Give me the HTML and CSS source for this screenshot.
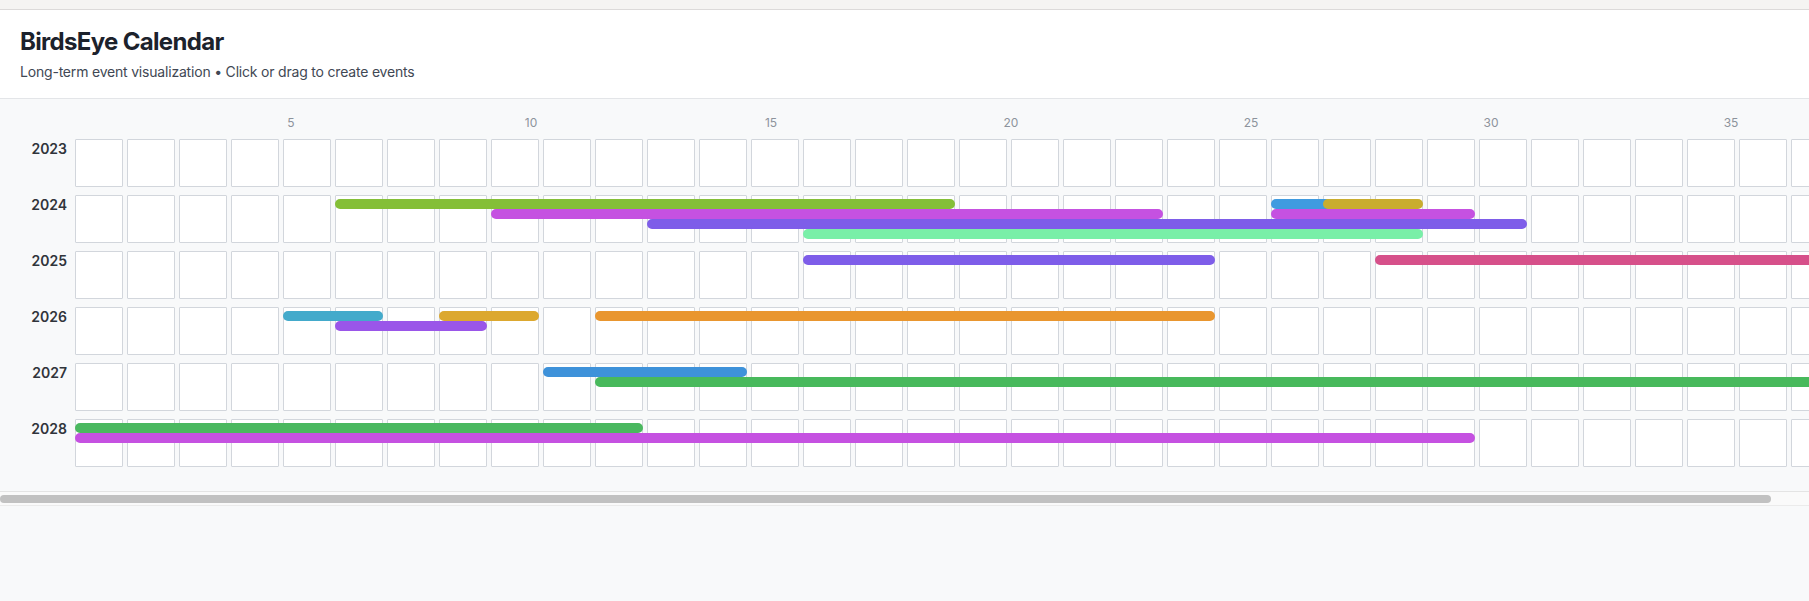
FILE: index.html
```html
<!DOCTYPE html>
<html lang="en">
<head>
<meta charset="utf-8">
<title>BirdsEye Calendar</title>
<link rel="stylesheet" href="styles.css">
</head>
<body>
<div class="topstrip"></div>
<header class="app-header">
  <h1 class="title">BirdsEye Calendar</h1>
  <p class="subtitle">Long-term event visualization • Click or drag to create events</p>
</header>
<main class="viewport">
  <div class="scroller">
    <div class="board">
      <div class="day-scale">
        <span></span><span></span><span></span><span></span><span>5</span>
        <span></span><span></span><span></span><span></span><span>10</span>
        <span></span><span></span><span></span><span></span><span>15</span>
        <span></span><span></span><span></span><span></span><span>20</span>
        <span></span><span></span><span></span><span></span><span>25</span>
        <span></span><span></span><span></span><span></span><span>30</span>
        <span></span><span></span><span></span><span></span><span>35</span>
      </div>

      <div class="year-row">
        <div class="year-label">2023</div>
        <div class="track">
          <i class="cell"></i><i class="cell"></i><i class="cell"></i><i class="cell"></i><i class="cell"></i><i class="cell"></i><i class="cell"></i><i class="cell"></i><i class="cell"></i><i class="cell"></i><i class="cell"></i><i class="cell"></i><i class="cell"></i><i class="cell"></i><i class="cell"></i><i class="cell"></i><i class="cell"></i><i class="cell"></i><i class="cell"></i><i class="cell"></i><i class="cell"></i><i class="cell"></i><i class="cell"></i><i class="cell"></i><i class="cell"></i><i class="cell"></i><i class="cell"></i><i class="cell"></i><i class="cell"></i><i class="cell"></i><i class="cell"></i><i class="cell"></i><i class="cell"></i><i class="cell"></i>
        </div>
      </div>

      <div class="year-row">
        <div class="year-label">2024</div>
        <div class="track">
          <i class="cell"></i><i class="cell"></i><i class="cell"></i><i class="cell"></i><i class="cell"></i><i class="cell"></i><i class="cell"></i><i class="cell"></i><i class="cell"></i><i class="cell"></i><i class="cell"></i><i class="cell"></i><i class="cell"></i><i class="cell"></i><i class="cell"></i><i class="cell"></i><i class="cell"></i><i class="cell"></i><i class="cell"></i><i class="cell"></i><i class="cell"></i><i class="cell"></i><i class="cell"></i><i class="cell"></i><i class="cell"></i><i class="cell"></i><i class="cell"></i><i class="cell"></i><i class="cell"></i><i class="cell"></i><i class="cell"></i><i class="cell"></i><i class="cell"></i><i class="cell"></i>
          <div class="event" style="--s:6;--e:17;--l:0;--c:#84bf37"></div>
          <div class="event" style="--s:9;--e:21;--l:1;--c:#c551e1"></div>
          <div class="event" style="--s:12;--e:28;--l:2;--c:#7e5de9"></div>
          <div class="event" style="--s:15;--e:26;--l:3;--c:#79efa8"></div>
          <div class="event" style="--s:24;--e:25;--l:0;--c:#3f9be0"></div>
          <div class="event" style="--s:25;--e:26;--l:0;--c:#c9ad2f"></div>
          <div class="event" style="--s:24;--e:27;--l:1;--c:#c551e1"></div>
        </div>
      </div>

      <div class="year-row">
        <div class="year-label">2025</div>
        <div class="track">
          <i class="cell"></i><i class="cell"></i><i class="cell"></i><i class="cell"></i><i class="cell"></i><i class="cell"></i><i class="cell"></i><i class="cell"></i><i class="cell"></i><i class="cell"></i><i class="cell"></i><i class="cell"></i><i class="cell"></i><i class="cell"></i><i class="cell"></i><i class="cell"></i><i class="cell"></i><i class="cell"></i><i class="cell"></i><i class="cell"></i><i class="cell"></i><i class="cell"></i><i class="cell"></i><i class="cell"></i><i class="cell"></i><i class="cell"></i><i class="cell"></i><i class="cell"></i><i class="cell"></i><i class="cell"></i><i class="cell"></i><i class="cell"></i><i class="cell"></i><i class="cell"></i>
          <div class="event" style="--s:15;--e:22;--l:0;--c:#7e5de9"></div>
          <div class="event" style="--s:26;--e:34;--l:0;--c:#d6508a"></div>
        </div>
      </div>

      <div class="year-row">
        <div class="year-label">2026</div>
        <div class="track">
          <i class="cell"></i><i class="cell"></i><i class="cell"></i><i class="cell"></i><i class="cell"></i><i class="cell"></i><i class="cell"></i><i class="cell"></i><i class="cell"></i><i class="cell"></i><i class="cell"></i><i class="cell"></i><i class="cell"></i><i class="cell"></i><i class="cell"></i><i class="cell"></i><i class="cell"></i><i class="cell"></i><i class="cell"></i><i class="cell"></i><i class="cell"></i><i class="cell"></i><i class="cell"></i><i class="cell"></i><i class="cell"></i><i class="cell"></i><i class="cell"></i><i class="cell"></i><i class="cell"></i><i class="cell"></i><i class="cell"></i><i class="cell"></i><i class="cell"></i><i class="cell"></i>
          <div class="event" style="--s:5;--e:6;--l:0;--c:#43aacb"></div>
          <div class="event" style="--s:6;--e:8;--l:1;--c:#9a56e9"></div>
          <div class="event" style="--s:8;--e:9;--l:0;--c:#dca82f"></div>
          <div class="event" style="--s:11;--e:22;--l:0;--c:#e9962f"></div>
        </div>
      </div>

      <div class="year-row">
        <div class="year-label">2027</div>
        <div class="track">
          <i class="cell"></i><i class="cell"></i><i class="cell"></i><i class="cell"></i><i class="cell"></i><i class="cell"></i><i class="cell"></i><i class="cell"></i><i class="cell"></i><i class="cell"></i><i class="cell"></i><i class="cell"></i><i class="cell"></i><i class="cell"></i><i class="cell"></i><i class="cell"></i><i class="cell"></i><i class="cell"></i><i class="cell"></i><i class="cell"></i><i class="cell"></i><i class="cell"></i><i class="cell"></i><i class="cell"></i><i class="cell"></i><i class="cell"></i><i class="cell"></i><i class="cell"></i><i class="cell"></i><i class="cell"></i><i class="cell"></i><i class="cell"></i><i class="cell"></i><i class="cell"></i>
          <div class="event" style="--s:10;--e:13;--l:0;--c:#3e92da"></div>
          <div class="event" style="--s:11;--e:34;--l:1;--c:#48b95c"></div>
        </div>
      </div>

      <div class="year-row">
        <div class="year-label">2028</div>
        <div class="track">
          <i class="cell"></i><i class="cell"></i><i class="cell"></i><i class="cell"></i><i class="cell"></i><i class="cell"></i><i class="cell"></i><i class="cell"></i><i class="cell"></i><i class="cell"></i><i class="cell"></i><i class="cell"></i><i class="cell"></i><i class="cell"></i><i class="cell"></i><i class="cell"></i><i class="cell"></i><i class="cell"></i><i class="cell"></i><i class="cell"></i><i class="cell"></i><i class="cell"></i><i class="cell"></i><i class="cell"></i><i class="cell"></i><i class="cell"></i><i class="cell"></i><i class="cell"></i><i class="cell"></i><i class="cell"></i><i class="cell"></i><i class="cell"></i><i class="cell"></i><i class="cell"></i>
          <div class="event" style="--s:1;--e:11;--l:0;--c:#4ab85f"></div>
          <div class="event" style="--s:1;--e:27;--l:1;--c:#c551e1"></div>
        </div>
      </div>
    </div>
  </div>
  <div class="hscroll"><div class="hscroll-thumb"></div></div>
</main>
</body>
</html>
```

FILE: styles.css
```css
html, body {
  margin: 0;
  padding: 0;
  background: #f8f9fa;
  font-family: Inter, "Noto Sans", "Liberation Sans", sans-serif;
}

.topstrip {
  height: 9px;
  background: #f5f4f2;
  border-bottom: 1px solid #dcdad9;
}

.app-header {
  background: #ffffff;
  border-bottom: 1px solid #e3e5e8;
  padding: 16px 20px 16px 20px;
}

.title {
  margin: 0;
  font-size: 24px;
  line-height: 32px;
  font-weight: 700;
  color: #1c222c;
  letter-spacing: -0.028em;
}

.subtitle {
  margin: 4px 0 0;
  font-size: 14px;
  line-height: 20px;
  color: #414854;
  letter-spacing: -0.014em;
}

.viewport {
  background: #f8f9fa;
}

.scroller {
  overflow: hidden;
}

.board {
  width: max-content;
  padding: 16px 9px 24px 0;
}

.day-scale {
  display: flex;
  height: 16px;
  margin: 0 0 8px 75px;
}

.day-scale span {
  flex: 0 0 48px;
  text-align: center;
  font-size: 12px;
  line-height: 16px;
  color: #8d939c;
}

.year-row {
  display: flex;
  gap: 8px;
  height: 48px;
  margin-bottom: 8px;
}

.year-row:last-child {
  margin-bottom: 0;
}

.year-label {
  width: 67px;
  text-align: right;
  font-size: 14px;
  line-height: 20px;
  font-weight: 600;
  color: #30343b;
}

.track {
  position: relative;
  display: grid;
  grid-template-columns: repeat(34, 48px);
  gap: 4px;
}

.cell {
  display: block;
  height: 48px;
  box-sizing: border-box;
  background: #ffffff;
  border: 1px solid #d2d6dc;
  border-radius: 1px;
}

.event {
  position: absolute;
  height: 10px;
  border-radius: 5px;
  left: calc((var(--s) - 1) * 52px);
  width: calc((var(--e) - var(--s) + 1) * 52px - 4px);
  top: calc(4px + var(--l) * 10px);
  background: var(--c);
}

.hscroll {
  height: 13px;
  padding-top: 3px;
  box-sizing: border-box;
  height: 15px;
  background: #fafafa;
  border-top: 1px solid #e4e4e4;
  border-bottom: 1px solid #ebebeb;
}

.hscroll-thumb {
  width: 97.9%;
  height: 8px;
  border-radius: 4px;
  background: #c1c1c1;
}
```
